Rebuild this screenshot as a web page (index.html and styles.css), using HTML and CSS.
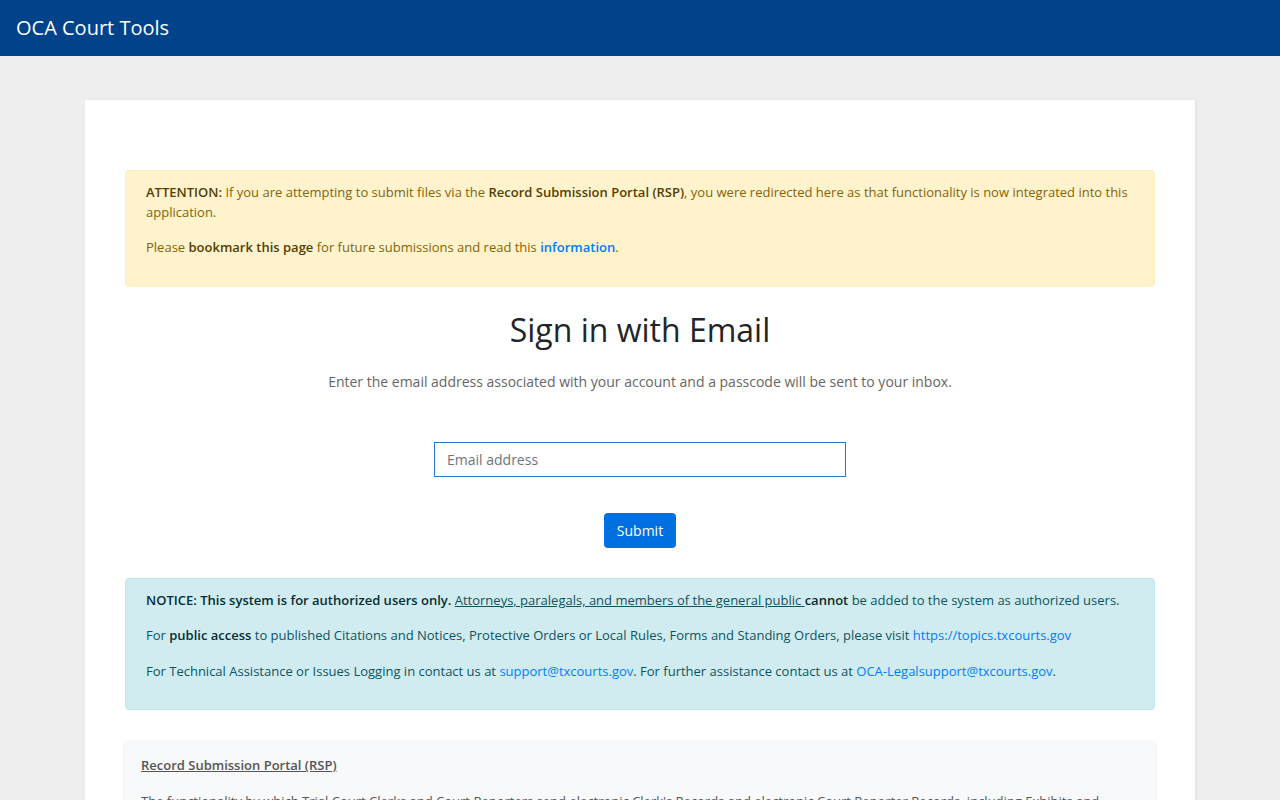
FILE: index.html
```html
<!DOCTYPE html>
<html lang="en">
<head>
    <meta charset="UTF-8">
    <meta name="viewport" content="width=device-width, initial-scale=1.0">
    <title>OCA Court Tools - Sign in</title>
    <link rel="stylesheet" href="styles.css">
</head>
<body>
    <nav class="navbar">
        <a class="brand" href="#">OCA Court Tools</a>
    </nav>

    <main class="container">
        <div class="card">
            <div class="alert alert-warning">
                <p><strong>ATTENTION:</strong> If you are attempting to submit files via the <strong>Record Submission Portal (RSP)</strong>, you were redirected here as that functionality is now integrated into this application.</p>
                <p>Please <strong>bookmark this page</strong> for future submissions and read this <a href="#" class="alert-link">information</a>.</p>
            </div>

            <form class="signin">
                <h1>Sign in with Email</h1>
                <p class="lead">Enter the email address associated with your account and a passcode will be sent to your inbox.</p>
                <input type="email" class="form-control" placeholder="Email address">
                <button type="submit" class="btn">Submit</button>
            </form>

            <div class="alert alert-info">
                <p><strong>NOTICE: This system is for authorized users only.</strong> <u>Attorneys, paralegals, and members of the general public </u><strong>cannot</strong> be added to the system as authorized users.</p>
                <p>For <strong>public access</strong> to published Citations and Notices, Protective Orders or Local Rules, Forms and Standing Orders, please visit <a href="#">https://topics.txcourts.gov</a></p>
                <p>For Technical Assistance or Issues Logging in contact us at <a href="#">support@txcourts.gov</a>. For further assistance contact us at <a href="#">OCA-Legalsupport@txcourts.gov</a>.</p>
            </div>

            <div class="info-box">
                <p class="info-title"><u>Record Submission Portal (RSP)</u></p>
                <p>The functionality by which Trial Court Clerks and Court Reporters send electronic Clerk's Records and electronic Court Reporter Records, including Exhibits and Supplemental Records, to the appellate courts is now part of this application.</p>
            </div>
        </div>
    </main>
</body>
</html>
```

FILE: styles.css
```css
* {
    box-sizing: border-box;
}
body {
    margin: 0;
    font-family: "Open Sans", "Noto Sans", Arial, sans-serif;
    font-size: 13px;
    line-height: 1.5;
    color: #212529;
    background-color: #eeeeee;
}
a {
    color: #007bff;
    text-decoration: none;
}
p {
    margin: 0 0 16px;
}
strong {
    font-weight: 600;
}
.navbar {
    height: 56px;
    background-color: #00438a;
    display: flex;
    align-items: center;
    padding: 0 16px;
}
.brand {
    color: #ffffff;
    font-size: 20px;
    line-height: 30px;
}
.container {
    max-width: 1110px;
    margin: 44px auto 0;
}
.card {
    background-color: #ffffff;
    padding: 70px 40px 40px;
    box-shadow: 1px 0 3px rgba(0, 0, 0, 0.06);
}
.alert {
    padding: 12px 20px;
    border: 1px solid transparent;
    border-radius: 4px;
}
.alert-warning {
    color: #856404;
    background-color: #fff3cd;
    border-color: #ffeeba;
}
.alert-warning strong {
    color: #533f03;
}
.alert-link {
    font-weight: 600;
    color: #007bff;
}
.alert-info {
    color: #0c5460;
    background-color: #d1ecf1;
    border-color: #bee5eb;
}
.alert-info strong {
    color: #062c33;
}
.signin {
    display: flex;
    flex-direction: column;
    align-items: center;
    margin: 18px 0 30px;
}
.signin h1 {
    font-size: 32px;
    font-weight: 400;
    line-height: 50px;
    margin: 0 0 16px;
    color: #212529;
}
.lead {
    font-size: 14px;
    color: #666666;
    margin: 0 0 50px;
}
.form-control {
    width: 412px;
    height: 35px;
    padding: 0 12px;
    font-family: inherit;
    font-size: 14px;
    color: #495057;
    border: 1px solid #2a74d1;
    border-radius: 0;
    outline: none;
}
.form-control::placeholder {
    color: #6c757d;
}
.btn {
    margin-top: 36px;
    width: 72px;
    height: 35px;
    font-family: inherit;
    font-size: 14px;
    color: #ffffff;
    background-color: #006fe0;
    border: none;
    border-radius: 4px;
    cursor: pointer;
}
.info-box {
    margin-top: 32px;
    background-color: #f8f9fa;
    padding: 14px 16px 16px;
    box-shadow: 0 1px 4px rgba(0, 0, 0, 0.12);
    color: #555555;
}
.info-title {
    font-weight: 600;
    margin-bottom: 16px;
}
```
